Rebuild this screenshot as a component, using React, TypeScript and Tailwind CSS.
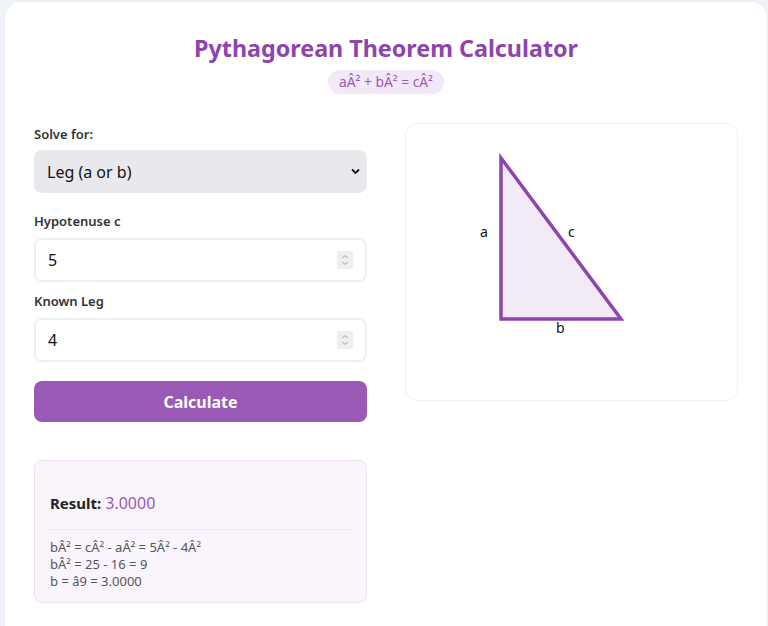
import { useState } from "react";

const font = { fontFamily: '"Noto Sans", "Open Sans", sans-serif' };

function Triangle() {
  return (
    <svg width="333" height="277" viewBox="0 0 333 277" className="block">
      <polygon
        points="95,34 95,195 215,195"
        fill="#f3eaf7"
        stroke="#8e44ad"
        strokeWidth="3.5"
      />
      <text x="74" y="113" fontSize="14" fill="#111" fontFamily="Noto Sans, sans-serif">a</text>
      <text x="162" y="113" fontSize="14" fill="#111" fontFamily="Noto Sans, sans-serif">c</text>
      <text x="150" y="209" fontSize="14" fill="#111" fontFamily="Noto Sans, sans-serif">b</text>
    </svg>
  );
}

export default function App() {
  const [mode, setMode] = useState("leg");
  const [c, setC] = useState("5");
  const [leg, setLeg] = useState("4");

  return (
    <div className="min-h-screen bg-[#f0f4f8] pt-[2px] pl-[5px]" style={font}>
      <div className="h-[640px] w-[762px] rounded-2xl bg-white px-[29px] pt-[30px] shadow-[0_2px_8px_rgba(0,0,0,0.04)]">
        <div className="flex flex-col items-center">
          <h1 className="text-[23.3px] leading-8 font-bold text-[#8e44ad]">
            Pythagorean Theorem Calculator
          </h1>
          <div className="mt-[6px] rounded-full bg-[#f3e8f8] px-[11px] text-[13.8px] leading-6 text-[#9b59b6]">
            aÂ² + bÂ² = cÂ²
          </div>
        </div>

        <div className="mt-[29px] grid grid-cols-2 gap-[38px]">
          <div className="flex flex-col">
            <label className="mt-[1px] text-[13px] leading-5 font-semibold text-[#333]">
              Solve for:
            </label>
            <div className="relative mt-[6px]">
              <select
                value={mode}
                onChange={(e) => setMode(e.target.value)}
                className="h-[43px] w-full appearance-none rounded-lg bg-[#e9e9ed] px-[13px] text-[16px] text-[#111] outline-none"
                style={font}
              >
                <option value="leg">Leg (a or b)</option>
                <option value="hyp">Hypotenuse (c)</option>
              </select>
              <svg
                className="pointer-events-none absolute top-[18px] right-[7px]"
                width="9"
                height="7"
                viewBox="0 0 9 7"
              >
                <path d="M1 1.5 4.5 5 8 1.5" fill="none" stroke="#111" strokeWidth="1.8" />
              </svg>
            </div>

            <label className="mt-[18px] text-[13px] leading-5 font-semibold text-[#333]">
              Hypotenuse c
            </label>
            <div className="relative mt-[7px]">
              <input
                type="text"
                value={c}
                onChange={(e) => setC(e.target.value)}
                className="h-[44px] w-full rounded-lg border-2 border-[#eef0f0] px-[12px] text-[16px] text-[#111] outline-none"
                style={font}
              />
              <Spinner />
            </div>

            <label className="mt-[9px] text-[13px] leading-5 font-semibold text-[#333]">
              Known Leg
            </label>
            <div className="relative mt-[7px]">
              <input
                type="text"
                value={leg}
                onChange={(e) => setLeg(e.target.value)}
                className="h-[44px] w-full rounded-lg border-2 border-[#eef0f0] px-[12px] text-[16px] text-[#111] outline-none"
                style={font}
              />
              <Spinner />
            </div>

            <button className="mt-[19px] h-[41px] w-full rounded-lg bg-[#9b59b6] text-[16px] font-bold text-white">
              Calculate
            </button>

            <div className="mt-[38px] rounded-lg border border-[#f0dff5] bg-[#faf5fc] px-[15px] pt-[30px] pb-[12px]">
              <div className="flex items-baseline gap-1">
                <span className="text-[15px] font-bold text-[#222]">Result:</span>
                <span className="text-[16px] text-[#9b59b6]">3.0000</span>
              </div>
              <div className="mt-[14px] border-t border-[#efe6f2] pt-[9px] text-[13px] leading-[17px] text-[#555]">
                <div>bÂ² = cÂ² - aÂ² = 5Â² - 4Â²</div>
                <div>bÂ² = 25 - 16 = 9</div>
                <div>b = â9 = 3.0000</div>
              </div>
            </div>
          </div>

          <div className="self-start">
            <div className="h-[278px] rounded-xl border border-[#f0f0f0] bg-white">
              <Triangle />
            </div>
          </div>
        </div>
      </div>
    </div>
  );
}

function Spinner() {
  return (
    <div className="pointer-events-none absolute top-[13px] right-[14px] flex h-[18px] w-[16px] flex-col items-center justify-center bg-[#efeff1]">
      <svg width="8" height="14" viewBox="0 0 8 14">
        <path d="M1.5 5 4 2.5 6.5 5M1.5 9 4 11.5 6.5 9" fill="none" stroke="#9a9a9a" strokeWidth="1" />
      </svg>
    </div>
  );
}
